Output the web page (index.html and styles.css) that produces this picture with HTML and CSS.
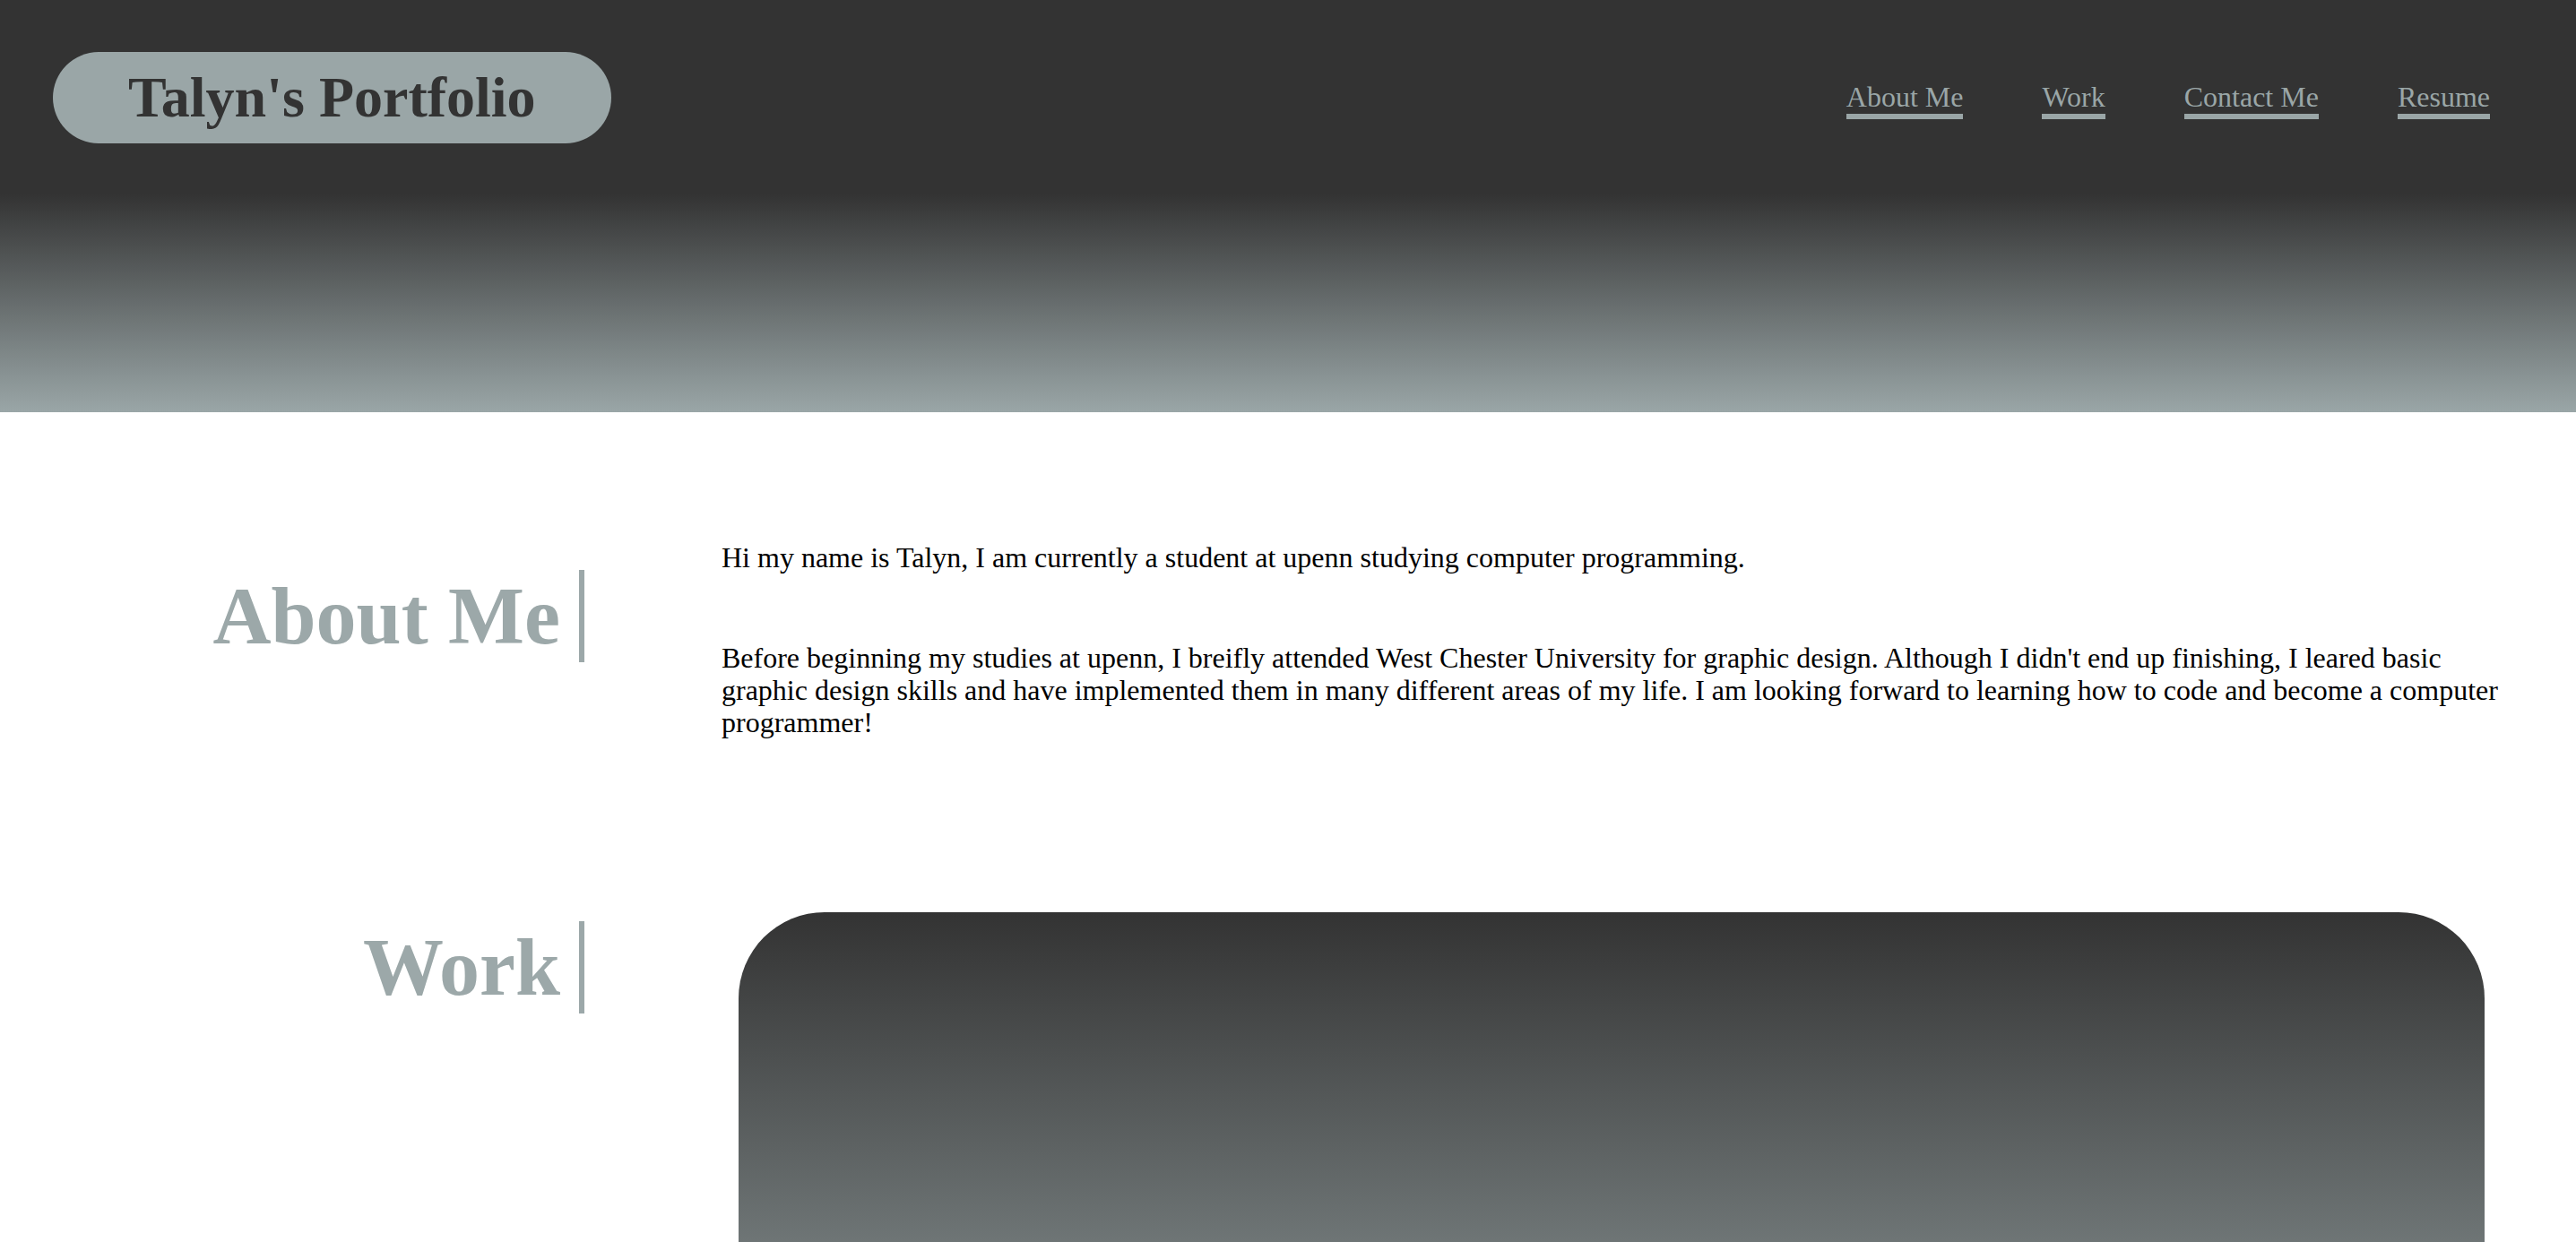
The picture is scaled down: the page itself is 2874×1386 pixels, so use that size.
FILE: index.html
```html
<!DOCTYPE html>
<html lang="en">
<head>
<meta charset="utf-8">
<title>Talyn's Portfolio</title>
<link rel="stylesheet" href="styles.css">
</head>
<body>
<header class="hero">
  <div class="topbar">
    <h1 class="logo">Talyn's Portfolio</h1>
    <nav class="nav">
      <a href="#about">About Me</a>
      <a href="#work">Work</a>
      <a href="#contact">Contact Me</a>
      <a href="#resume">Resume</a>
    </nav>
  </div>
</header>
<main class="content">
  <section class="row about" id="about">
    <div class="label"><h2 class="heading">About Me</h2></div>
    <div class="body">
      <p class="intro">Hi my name is Talyn, I am currently a student at upenn studying computer programming.</p>
      <p class="story">Before beginning my studies at upenn, I breifly attended West Chester University for graphic design. Although I didn't end up finishing, I leared basic graphic design skills and have implemented them in many different areas of my life. I am looking forward to learning how to code and become a computer programmer!</p>
    </div>
  </section>
  <section class="row work" id="work">
    <div class="label"><h2 class="heading">Work</h2></div>
    <div class="body">
      <div class="card"></div>
    </div>
  </section>
</main>
</body>
</html>
```
FILE: styles.css
```css
html, body {
  margin: 0;
  padding: 0;
}
body {
  font-family: "Liberation Serif", "Times New Roman", serif;
  background: #ffffff;
  color: #000000;
  overflow: hidden;
}
.hero {
  height: 460px;
  background: linear-gradient(to bottom, #333333 0%, #333333 47%, #9aa6a7 100%);
}
.topbar {
  display: flex;
  justify-content: space-between;
  align-items: center;
  padding: 58px 96px 0 59px;
}
.logo {
  margin: 0;
  font-size: 64px;
  font-weight: bold;
  line-height: normal;
  color: #333333;
  background: #9aa6a7;
  border-radius: 51px;
  padding: 14px 84px;
}
.nav {
  display: flex;
  gap: 88px;
  font-size: 32px;
  line-height: normal;
  margin-top: 5px;
}
.nav a {
  color: #9aa6a7;
  text-decoration: none;
  border-bottom: 6px solid #9aa6a7;
}
.content {
  padding-top: 144px;
}
.row {
  display: grid;
  grid-template-columns: 652px 1987px;
  column-gap: 153px;
}
.label {
  display: flex;
  justify-content: flex-end;
  align-items: flex-start;
}
.heading {
  margin: 0;
  font-size: 90px;
  font-weight: bold;
  line-height: normal;
  color: #9ca8a9;
  border-right: 6px solid #9ca8a9;
  padding-right: 21px;
}
.about .heading {
  margin-top: 32px;
}
.body p {
  margin: 0;
  font-size: 32px;
  line-height: 36px;
}
.body .story {
  margin-top: 76px;
}
.work {
  margin-top: 194px;
}
.work .heading {
  margin-top: 10px;
}
.card {
  margin: 0 20px 0 19px;
  height: 640px;
  border-radius: 96px;
  background: linear-gradient(to bottom, #333333 0%, #9aa6a7 100%);
}
```
